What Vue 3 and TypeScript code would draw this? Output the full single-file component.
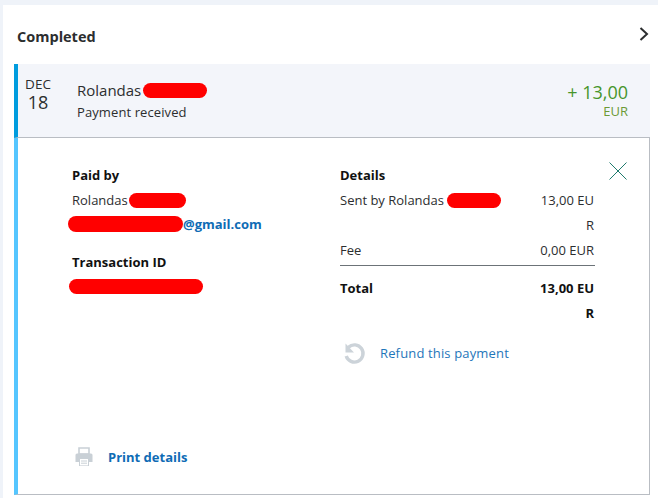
<script setup lang="ts">
const month = 'DEC'
</script>

<template>
  <div class="page">
    <section class="panel">
      <header class="head">
        <h2>Completed</h2>
        <svg class="chev" width="12" height="16" viewBox="0 0 12 16"><path d="M2.5 2 L9 8 L2.5 14" fill="none" stroke="#2c2e2f" stroke-width="2"/></svg>
      </header>
      <div class="row">
        <div class="date"><span class="mon">{{ month }}</span><span class="day">18</span></div>
        <div class="who">
          <div class="name">Rolandas<i class="red r1"></i></div>
          <div class="sub">Payment received</div>
        </div>
        <div class="amt"><div class="val">+ 13,00</div><div class="cur">EUR</div></div>
      </div>
      <div class="detail">
        <svg class="close" width="20" height="20" viewBox="0 0 20 20"><path d="M1.5 1.5 L18.5 18.5 M18.5 1.5 L1.5 18.5" stroke="#1f7a6d" stroke-width="1" fill="none"/></svg>
        <div class="cols">
          <div class="left">
            <h3>Paid by</h3>
            <div class="line">Rolandas<i class="red r2"></i></div>
            <div class="mail"><i class="red r3"></i><b>@gmail.com</b></div>
            <h3 class="tx">Transaction ID</h3>
            <div class="txid"><i class="red r4"></i></div>
          </div>
          <div class="right">
            <h3>Details</h3>
            <div class="kv"><span>Sent by Rolandas<i class="red r5"></i></span><span class="v">13,00 EUR</span></div>
            <div class="kv fee"><span>Fee</span><span class="v wide">0,00 EUR</span></div>
            <div class="kv total"><span>Total</span><span class="v">13,00 EUR</span></div>
            <div class="refund">
              <svg width="24" height="24" viewBox="0 0 24 24"><path d="M6.5 6.2 A8.6 8.6 0 1 1 4.2 15" fill="none" stroke="#ccd3d9" stroke-width="3.4"/><path d="M3.5 2.5 L3.5 11.5 L12 11.5 Z" fill="#ccd3d9"/></svg>
              <a>Refund this payment</a>
            </div>
          </div>
        </div>
        <div class="print">
          <svg width="18" height="20" viewBox="0 0 18 20"><path d="M4 1 H14 V7 H4 Z" fill="none" stroke="#c9d0d6" stroke-width="1.6"/><path d="M2 6.5 H16 Q17.5 6.5 17.5 8 V15 H14 V19 H4 V15 H0.5 V8 Q0.5 6.5 2 6.5 Z" fill="#c9d0d6"/><path d="M5 12 H13 V18.4 H5 Z" fill="#fff"/><path d="M6 14 H12 M6 16.2 H12" stroke="#c9d0d6" stroke-width="1"/></svg>
          <a>Print details</a>
        </div>
      </div>
    </section>
  </div>
</template>

<style>
html, body { margin: 0; background: #eff3f9; }
</style>

<style scoped>
.page { height: 498px; padding: 5px 0 0 3px; box-sizing: border-box; overflow: hidden; font-family: "Open Sans", "Noto Sans", sans-serif; color: #2c2e2f; }
.panel { background: #fff; height: 493px; padding: 0 8px 0 11px; box-sizing: border-box; display: flex; flex-direction: column; }
.head { height: 59px; display: flex; align-items: center; justify-content: space-between; padding: 5px 0 0 3px; box-sizing: border-box; }
h2 { margin: 0; font-size: 14.5px; font-weight: 700; line-height: 20px; }
.chev { margin-top: -6px; margin-right: 0; }
.row { height: 74px; box-sizing: border-box; background: #f3f5fa; border-left: 4px solid #009cde; display: flex; align-items: flex-start; border-bottom: 1px solid #b9bdc3; }
.date { width: 40px; padding-top: 13px; flex: none; display: flex; flex-direction: column; align-items: center; line-height: 1; margin-right: 19px; }
.mon { font-size: 13.5px; line-height: 15px; }
.day { font-size: 18px; line-height: 20px; }
.who { flex: 1; padding-top: 16px; }
.name { font-size: 15px; line-height: 20px; display: flex; align-items: center; }
.sub { font-size: 13px; line-height: 20px; margin-top: 2px; letter-spacing: 0.1px; }
.amt { text-align: right; padding: 17px 22px 0 0; color: #47952b; }
.val { font-size: 18px; line-height: 22px; font-weight: 500; }
.cur { font-size: 13px; line-height: 16px; color: #6c9a35; }
.red { display: inline-block; background: #f00; border-radius: 8px; }
.r1 { width: 64px; height: 15px; margin-left: 2px; }
.r2 { width: 57px; height: 15px; margin-left: 1px; }
.r3 { width: 115px; height: 16px; border-radius: 8px; }
.r4 { width: 134px; height: 15px; }
.r5 { width: 54px; height: 15px; margin-left: 3px; }
.detail { position: relative; flex: 1; margin-bottom: 3px; border-left: 4px solid #55c6ff; border-right: 1px solid #b9bdc3; border-bottom: 1px solid #b9bdc3; box-sizing: border-box; display: flex; flex-direction: column; }
.close { position: absolute; top: 23px; right: 21px; }
.cols { display: flex; padding: 28px 0 0 54px; flex: 1; }
.left { width: 268px; }
.right { width: 255px; }
h3 { margin: 0; font-size: 13px; font-weight: 700; line-height: 18px; color: #111; }
.line { font-size: 13px; line-height: 16px; margin-top: 8px; display: flex; align-items: center; }
.mail { display: flex; align-items: center; margin: 8px 0 0 -4px; height: 16px; }
.mail b { font-size: 13px; color: #0f6cb5; font-weight: 700; }
.tx { margin-top: 21px; }
.txid { margin: 6px 0 0 -3px; height: 16px; }
.kv { display: flex; justify-content: space-between; font-size: 13px; line-height: 25px; color: #2c2e2f; }
.kv > span:first-child { display: flex; align-items: flex-start; height: 25px; }
.kv .red { margin-top: 5px; }
.kv .v { width: 58px; margin-right: 1px; text-align: right; word-break: break-all; }
.kv .wide { width: auto; }
.right > h3 + .kv { margin-top: 4px; }
.fee { border-bottom: 1px solid #6c7378; padding-bottom: 2px; line-height: 25px; }
.total { font-weight: 700; color: #111; margin-top: 10px; }
.refund { display: flex; align-items: center; gap: 14px; margin-top: 15px; margin-left: 2px; }
.refund a { font-size: 13px; letter-spacing: 0.15px; color: #1f76ba; }
.print { display: flex; align-items: center; gap: 15px; padding: 0 0 27px 57px; }
.print a { font-size: 13px; font-weight: 700; color: #0f6cb5; }
</style>
